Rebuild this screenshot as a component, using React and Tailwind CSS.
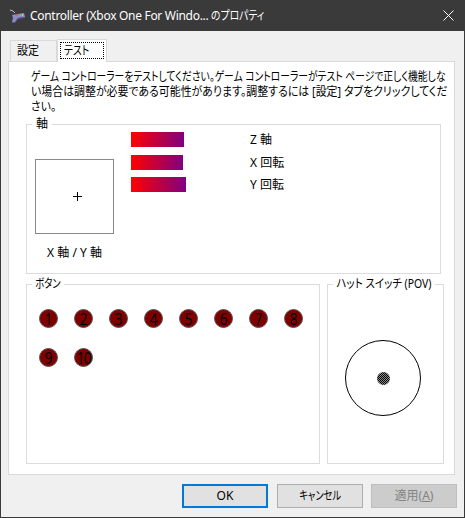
import React from "react";

const FONT = "font-['Noto_Sans','Noto_Sans_CJK_JP',sans-serif] [font-feature-settings:'palt']";

const axes = [
  { label: "Z 軸", bar: "w-[53px]", gap: "mt-0" },
  { label: "X 回転", bar: "w-[52px]", gap: "mt-[8px]" },
  { label: "Y 回転", bar: "w-[55px]", gap: "mt-[7px]" },
];

const buttons = [1, 2, 3, 4, 5, 6, 7, 8, 9, 10];

function GroupBox({ title, titleClass = "", className, children }) {
  return (
    <div className={`relative border border-[#dcdcdc] ${className}`}>
      <span className={`absolute -top-[9px] left-[5px] bg-white px-[4px] leading-[16px] whitespace-nowrap origin-left ${titleClass}`}>
        {title}
      </span>
      {children}
    </div>
  );
}

function PadIcon() {
  return (
    <svg width="17" height="14" viewBox="0 0 17 14" className="shrink-0">
      <path d="M1 1 L4 2 L6 4" stroke="#b9b9c9" fill="none" />
      <path d="M3 6 L15 4 L16 8 L9 9 L6 13 L3 13 L4 9 Z" fill="#8f8bc9" />
      <path d="M3 13 L6 13 L9 9 L16 8 L16 9 L9 10 L6 14 L3 14 Z" fill="#5a5790" />
      <rect x="7" y="5" width="2" height="2" fill="#e05a5a" />
      <rect x="10" y="5" width="2" height="2" fill="#58c080" />
      <rect x="13" y="5" width="1" height="2" fill="#e0d060" />
    </svg>
  );
}

export default function App() {
  return (
    <div className={`${FONT} w-[465px] h-[518px] overflow-hidden flex flex-col bg-[#f0f0f0] border-x border-b border-[#3a3a3a] text-[12px] text-black`}>
      <div className="h-[31px] shrink-0 bg-[#3a3a3a] flex items-center text-white pl-[8px] pr-[10px]">
        <PadIcon />
        <span className="ml-[4px] leading-[16px] whitespace-nowrap tracking-[-0.3px]">
          Controller (Xbox One For Windo... <span className="inline-block origin-left scale-x-[0.82] tracking-normal">のプロパティ</span>
        </span>
        <svg width="11" height="11" viewBox="0 0 11 11" className="ml-auto">
          <path d="M0.5 0.5 L10.5 10.5 M10.5 0.5 L0.5 10.5" stroke="#fff" strokeWidth="1" />
        </svg>
      </div>

      <div className="flex-1 flex flex-col pl-[7px]">
        <div className="flex items-end h-[23px] mt-[8px] pl-[2px] relative z-10">
          <div className="w-[47px] h-[21px] mb-px border border-b-0 border-[#d9d9d9] bg-[#f0f0f0] flex items-center pl-[6px] leading-[16px]">
            <span className="origin-left scale-x-[0.92]">設定</span>
          </div>
          <div className="w-[50px] h-[23px] border border-b-0 border-[#d9d9d9] bg-white p-[2px]">
            <div className="h-[17px] border border-dotted border-black flex items-center pl-[3px] leading-[14px]">
              <span className="origin-left scale-x-[0.82]">テスト</span>
            </div>
          </div>
        </div>

        <div className="-mt-px w-[447px] h-[414px] border border-[#d9d9d9] bg-white">
          <div className="ml-[22px] mt-[7px] h-[47px] leading-[15px] whitespace-nowrap">
            <p className="w-fit origin-left scale-x-[0.815]">
              ゲーム コントローラーをテストしてください。ゲーム コントローラーがテスト ページで正しく機能しな
            </p>
            <p className="w-fit origin-left scale-x-[0.91]">
              い場合は調整が必要である可能性があります。調整するには [設定] タブをクリックしてくだ
            </p>
            <p className="w-fit origin-left scale-x-[0.9]">さい。</p>
          </div>

          <GroupBox title="軸" className="ml-[17px] mt-[8px] w-[415px] h-[150px] pl-[8px] pt-[7px] flex items-start">
            <div className="w-[79px] mt-[27px] flex flex-col items-center">
              <div className="w-[79px] h-[75px] border border-[#888] flex items-center justify-center pl-[6px] text-[0px]">
                <svg width="9" height="9" viewBox="0 0 9 9">
                  <path d="M4.5 0 V9 M0 4.5 H9" stroke="#000" strokeWidth="1" />
                </svg>
              </div>
              <span className="mt-[11px] leading-[16px] whitespace-nowrap">X 軸 / Y 軸</span>
            </div>
            <div className="ml-[17px] flex flex-col">
              {axes.map((a) => (
                <div key={a.label} className={`flex items-center h-[15px] ${a.gap}`}>
                  <div className="w-[119px]">
                    <div className={`h-[15px] bg-linear-to-r/srgb from-[#ff0000] to-[#800080] ${a.bar}`} />
                  </div>
                  <span className="leading-[16px] whitespace-nowrap">{a.label}</span>
                </div>
              ))}
            </div>
          </GroupBox>

          <div className="ml-[17px] mt-[10px] flex gap-[7px]">
            <GroupBox title="ボタン" titleClass="scale-x-[0.78]" className="w-[294px] h-[180px] pl-[12px] pt-[24px]">
              <div className="grid grid-cols-[repeat(8,19px)] gap-x-[16px] gap-y-[20px]">
                {buttons.map((n) => (
                  <div
                    key={n}
                    className="w-[19px] h-[19px] rounded-full bg-[#800000] border-[1.5px] border-[#555] flex items-center justify-center text-[17px] text-black leading-none"
                  >
                    <span className="scale-x-[0.8] tracking-[-1px]">{n}</span>
                  </div>
                ))}
              </div>
            </GroupBox>
            <GroupBox title="ハット スイッチ (POV)" titleClass="scale-x-[0.87]" className="w-[117px] h-[180px] pl-[17px] pt-[55px]">
              <div className="w-[76px] h-[76px] rounded-full border border-black flex items-center justify-center">
                <div className="w-[13px] h-[13px] rounded-full bg-[conic-gradient(#000_25%,#888_0_50%,#000_0_75%,#888_0)] bg-[length:2px_2px]" />
              </div>
            </GroupBox>
          </div>
        </div>

        <div className="mt-[9px] flex justify-end pr-[7px]">
          <button className="w-[86px] h-[24px] border-2 border-[#0078d7] bg-[#e1e1e1] leading-[16px]">OK</button>
          <button className="ml-[9px] w-[86px] h-[24px] border border-[#adadad] bg-[#e1e1e1] leading-[16px]">
            <span className="inline-block scale-x-[0.77]">キャンセル</span>
          </button>
          <button className="ml-[8px] w-[86px] h-[24px] border border-[#bfbfbf] bg-[#cccccc] text-[#838383] leading-[16px]">
            適用(<span className="underline">A</span>)
          </button>
        </div>
      </div>
    </div>
  );
}
